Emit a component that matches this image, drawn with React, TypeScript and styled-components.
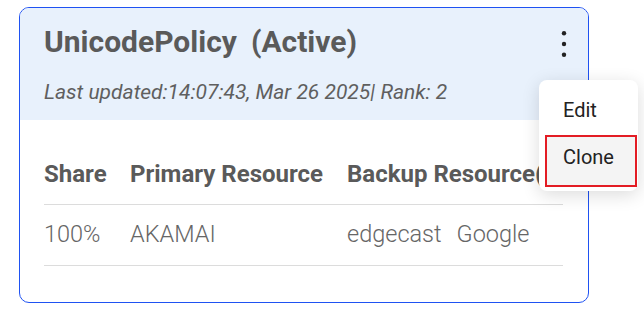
import React from "react";
import styled, { createGlobalStyle } from "styled-components";

const GlobalStyle = createGlobalStyle`
    body {
        margin: 0;
        background: #ffffff;
        font-family: Roboto, "Liberation Sans", sans-serif;
    }
`;

type Row = { share: string; primary: string; backups: string[] };

const rows: Row[] = [{ share: "100%", primary: "AKAMAI", backups: ["edgecast", "Google"] }];

const KebabIcon: React.FC = () => (
    <svg width="24" height="36" viewBox="0 0 24 36" fill="#222">
        <circle cx="12" cy="9.3" r="2.2" />
        <circle cx="12" cy="20" r="2.2" />
        <circle cx="12" cy="30.7" r="2.2" />
    </svg>
);

const App: React.FC = () => {
    return (
        <Page>
            <GlobalStyle />
            <Card>
                <CardHeader>
                    <TitleRow>
                        <Title>
                            UnicodePolicy<Status>(Active)</Status>
                        </Title>
                        <KebabButton aria-label="more">
                            <KebabIcon />
                        </KebabButton>
                    </TitleRow>
                    <Meta>Last updated:14:07:43, Mar 26 2025| Rank: 2</Meta>
                </CardHeader>
                <Table>
                    <HeadCell>Share</HeadCell>
                    <HeadCell>Primary Resource</HeadCell>
                    <HeadCell>Backup Resource(s)</HeadCell>
                    {rows.map((row) => (
                        <React.Fragment key={row.primary}>
                            <Cell>{row.share}</Cell>
                            <Cell>{row.primary}</Cell>
                            <Cell>
                                <Backups>
                                    {row.backups.map((b) => (
                                        <span key={b}>{b}</span>
                                    ))}
                                </Backups>
                            </Cell>
                        </React.Fragment>
                    ))}
                </Table>
            </Card>
            <Menu>
                <MenuItem>Edit</MenuItem>
                <MenuItem $selected>Clone</MenuItem>
            </Menu>
        </Page>
    );
};

const Page = styled.div`
    position: relative;
    width: 644px;
    height: 320px;
    padding: 7px 0 0 19px;
    box-sizing: border-box;
`;

const Card = styled.div`
    width: 570px;
    height: 296px;
    box-sizing: border-box;
    border: 1px solid #1f52f2;
    border-radius: 10px;
    overflow: hidden;
    background: #ffffff;
`;

const CardHeader = styled.div`
    background: #e8f1fc;
    padding: 16px 12px 15px 24px;
`;

const TitleRow = styled.div`
    display: flex;
    justify-content: space-between;
    align-items: center;
    height: 36px;
`;

const Title = styled.div`
    font-size: 30px;
    line-height: 36px;
    font-weight: 700;
    color: #5a5a5a;
    white-space: nowrap;
`;

const Status = styled.span`
    margin-left: 14px;
`;

const KebabButton = styled.button`
    display: flex;
    width: 24px;
    height: 36px;
    padding: 0;
    border: none;
    background: transparent;
    cursor: pointer;
`;

const Meta = styled.div`
    margin-top: 19px;
    font-size: 21px;
    line-height: 26px;
    font-style: italic;
    color: #5f5f5f;
`;

const Table = styled.div`
    display: grid;
    grid-template-columns: 86px 217px 216px;
    margin: 24px 0 0 24px;
    width: 519px;
`;

const HeadCell = styled.div`
    padding: 16px 0;
    font-size: 24px;
    line-height: 28px;
    font-weight: 700;
    color: #5a5a5a;
    white-space: nowrap;
    border-bottom: 1px solid #dcdcdc;
`;

const Cell = styled.div`
    padding: 15px 0 17px;
    font-size: 23.5px;
    line-height: 28px;
    font-weight: 300;
    color: #666666;
    white-space: nowrap;
    border-bottom: 1px solid #dcdcdc;
`;

const Backups = styled.div`
    display: flex;
    gap: 15px;
`;

const Menu = styled.div`
    position: absolute;
    top: 80px;
    left: 539px;
    width: 99px;
    padding: 6px 0 4px;
    box-sizing: border-box;
    background: #ffffff;
    border-radius: 8px;
    box-shadow: 0 4px 18px rgba(0, 0, 0, 0.14);
`;

const MenuItem = styled.div<{ $selected?: boolean }>`
    font-size: 20px;
    line-height: 24px;
    color: #222222;
    box-sizing: border-box;
    ${({ $selected }) =>
        $selected
            ? `
        height: 52px;
        margin: 1px 1px 0 6px;
        padding: 8px 0 0 16px;
        border: 2px solid #e31c24;
        background: #f4f4f4;
    `
            : `
        height: 48px;
        padding: 12px 0 0 24px;
    `}
`;

export default App;
